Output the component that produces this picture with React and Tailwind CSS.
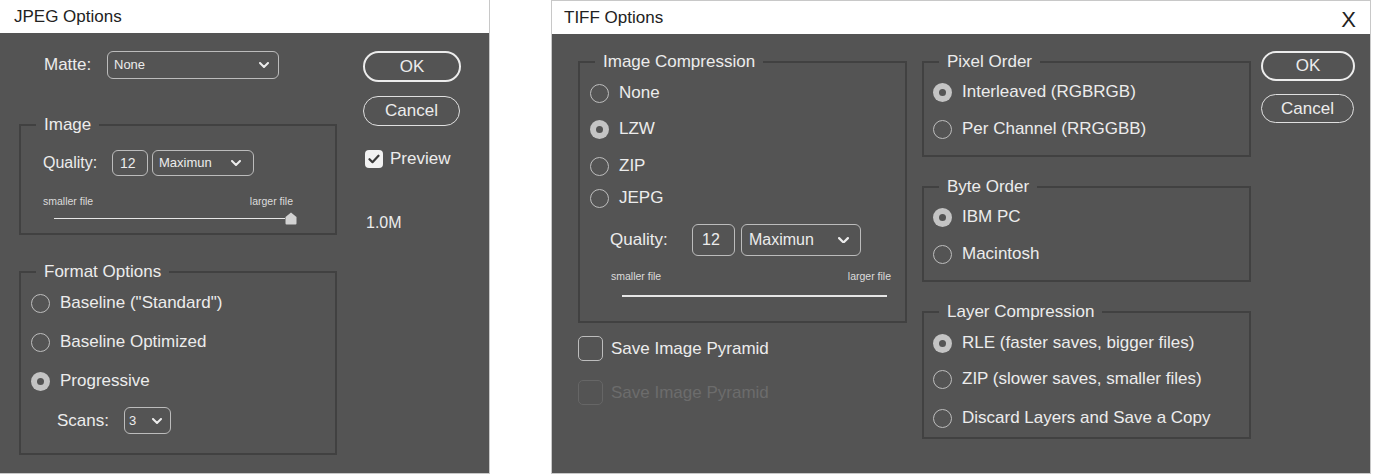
import React from 'react';

const Chevron = ({ size = 10 }) => (
  <svg width={size} height={size * 0.6} viewBox="0 0 10 6" fill="none">
    <path d="M1 1l4 4 4-4" stroke="#ececec" strokeWidth="2" strokeLinecap="round" strokeLinejoin="round" />
  </svg>
);

const Radio = ({ checked, label, className = '' }) => (
  <div className={`flex items-center gap-[10px] h-5 ${className}`}>
    {checked ? (
      <span className="w-[19px] h-[19px] rounded-full bg-[#c4c4c4] flex items-center justify-center shrink-0">
        <span className="w-[7px] h-[7px] rounded-full bg-[#545454]" />
      </span>
    ) : (
      <span className="w-[19px] h-[19px] rounded-full border-[1.5px] border-[#bdbdbd] shrink-0" />
    )}
    <span className="text-[17px] leading-5 text-[#ececec] whitespace-nowrap">{label}</span>
  </div>
);

const Group = ({ legend, className = '', children }) => (
  <fieldset className={`border-2 border-[#414141] ${className}`}>
    <legend className="ml-[15px] px-[8px] text-[17px] leading-5 text-[#ececec]">{legend}</legend>
    {children}
  </fieldset>
);

const PillButton = ({ children, primary, className = '' }) => (
  <div
    className={`rounded-full flex items-center justify-center text-[17px] text-[#ececec] ${
      primary ? 'border-2 border-[#ececec]' : 'border border-[#e0e0e0]'
    } ${className}`}
  >
    {children}
  </div>
);

const Slider = ({ withThumb, className = '' }) => (
  <div className={`flex items-center ${className}`}>
    <div className={`bg-[#e6e6e6] ${withThumb ? 'w-[231px] h-px' : 'w-[265px] h-[2px]'}`} />
    {withThumb && (
      <svg width="12" height="13" viewBox="0 0 12 13">
        <path d="M6 0.5 L11.5 5 L11.5 11.5 Q11.5 12.5 10.5 12.5 L1.5 12.5 Q0.5 12.5 0.5 11.5 L0.5 5 Z" fill="#d2d2d2" />
      </svg>
    )}
  </div>
);

const JpegDialog = () => (
  <div className="w-[490px] h-[474px] border-r border-b border-[#c8c8c8] flex flex-col shrink-0">
    <div className="h-[33px] bg-white pl-[14px] flex items-center text-[17px] text-[#222]">JPEG Options</div>
    <div className="flex-1 bg-[#545454] flex">
      <div className="w-[337px] pl-[19px]">
        <div className="mt-[18px] flex items-center h-[28px]">
          <span className="ml-[25px] w-[63px] text-[17px] text-[#ececec]">Matte:</span>
          <div className="w-[172px] h-[28px] rounded-[6px] border border-[#bcbcbc] pl-[6px] pr-[9px] flex items-center justify-between text-[13px] text-[#ececec]">
            <span>None</span>
            <Chevron />
          </div>
        </div>

        <Group legend="Image" className="mt-[36px] h-[120px]">
          <div className="mt-[15px] pl-[22px] flex items-center">
            <span className="w-[69px] text-[16px] text-[#ececec]">Quality:</span>
            <div className="w-[36px] h-[26px] rounded-[6px] border border-[#bcbcbc] pl-[7px] flex items-center text-[14px] text-[#ececec]">12</div>
            <div className="ml-[4px] w-[102px] h-[26px] rounded-[6px] border border-[#bcbcbc] pl-[6px] pr-[12px] flex items-center justify-between text-[13px] text-[#ececec]">
              <span>Maximun</span>
              <Chevron />
            </div>
          </div>
          <div className="mt-[18px] pl-[22px] pr-[42px] flex justify-between text-[10.5px] leading-[14px] text-[#dcdcdc]">
            <span>smaller file</span>
            <span>larger file</span>
          </div>
          <Slider withThumb className="mt-[4px] ml-[33px]" />
        </Group>

        <Group legend="Format Options" className="mt-[27px] h-[193px]">
          <div className="mt-[11px] pl-[10px] flex flex-col gap-[19px]">
            <Radio label={'Baseline ("Standard")'} />
            <Radio label="Baseline Optimized" />
            <Radio checked label="Progressive" />
          </div>
          <div className="mt-[16px] pl-[36px] flex items-center">
            <span className="w-[67px] text-[17px] text-[#ececec]">Scans:</span>
            <div className="w-[47px] h-[27px] rounded-[6px] border border-[#bcbcbc] pl-[4px] pr-[8px] flex items-center justify-between text-[13px] text-[#ececec]">
              <span>3</span>
              <Chevron />
            </div>
          </div>
        </Group>
      </div>

      <div className="ml-[26px] pt-[18px] flex flex-col">
        <PillButton primary className="w-[98px] h-[31px]">OK</PillButton>
        <PillButton className="mt-[14px] w-[97px] h-[30px]">Cancel</PillButton>
        <div className="mt-[20px] ml-[2px] flex items-center gap-[7px]">
          <span className="w-[18px] h-[18px] rounded-[4px] bg-[#f2f2f2] flex items-center justify-center">
            <svg width="12" height="10" viewBox="0 0 12 10" fill="none">
              <path d="M1.5 5.2l3 3 6-6.5" stroke="#3a3a3a" strokeWidth="2.2" strokeLinecap="round" strokeLinejoin="round" />
            </svg>
          </span>
          <span className="text-[17px] text-[#ececec]">Preview</span>
        </div>
        <div className="mt-[39px] ml-[3px] text-[16px] text-[#ececec]">1.0M</div>
      </div>
    </div>
  </div>
);

const TiffDialog = () => (
  <div className="ml-[61px] w-[820px] h-[474px] border border-[#c8c8c8] flex flex-col shrink-0">
    <div className="h-[33px] bg-white pl-[12px] pr-[14px] flex items-center justify-between text-[#222]">
      <span className="text-[17px]">TIFF Options</span>
      <span className="text-[22px] leading-none mt-[4px]">X</span>
    </div>
    <div className="flex-1 bg-[#545454] flex">
      <div className="ml-[26px] w-[329px]">
        <Group legend="Image Compression" className="mt-[18px] h-[271px]">
          <div className="mt-[11px] pl-[10px] flex flex-col">
            <Radio label="None" />
            <Radio checked label="LZW" className="mt-[16px]" />
            <Radio label="ZIP" className="mt-[17px]" />
            <Radio label="JEPG" className="mt-[12px]" />
          </div>
          <div className="mt-[16px] pl-[30px] flex items-center">
            <span className="w-[82px] text-[17px] text-[#ececec]">Quality:</span>
            <div className="w-[43px] h-[32px] rounded-[6px] border border-[#bcbcbc] pl-[9px] flex items-center text-[16px] text-[#ececec]">12</div>
            <div className="ml-[6px] w-[120px] h-[32px] rounded-[6px] border border-[#bcbcbc] pl-[7px] pr-[11px] flex items-center justify-between text-[16px] text-[#ececec]">
              <span>Maximun</span>
              <Chevron size={11} />
            </div>
          </div>
          <div className="mt-[13px] pl-[31px] pr-[14px] flex justify-between text-[10.5px] leading-[14px] text-[#dcdcdc]">
            <span>smaller file</span>
            <span>larger file</span>
          </div>
          <Slider className="mt-[12px] ml-[42px]" />
        </Group>

        <div className="mt-[13px] flex items-center gap-[8px]">
          <span className="w-[25px] h-[25px] rounded-[5px] border border-[#bdbdbd]" />
          <span className="text-[17px] text-[#ececec]">Save Image Pyramid</span>
        </div>
        <div className="mt-[18px] flex items-center gap-[8px]">
          <span className="w-[25px] h-[25px] rounded-[5px] border border-[#666666]" />
          <span className="text-[17px] text-[#6c6c6c]">Save Image Pyramid</span>
        </div>
      </div>

      <div className="ml-[15px] w-[329px]">
        <Group legend="Pixel Order" className="mt-[18px] h-[105px]">
          <div className="mt-[10px] pl-[9px] flex flex-col gap-[17px]">
            <Radio checked label="Interleaved (RGBRGB)" />
            <Radio label="Per Channel (RRGGBB)" />
          </div>
        </Group>
        <Group legend="Byte Order" className="mt-[20px] h-[105px]">
          <div className="mt-[10px] pl-[9px] flex flex-col gap-[17px]">
            <Radio checked label="IBM PC" />
            <Radio label="Macintosh" />
          </div>
        </Group>
        <Group legend="Layer Compression" className="mt-[20px] h-[137px]">
          <div className="mt-[11px] pl-[9px] flex flex-col">
            <Radio checked label="RLE (faster saves, bigger files)" />
            <Radio label="ZIP (slower saves, smaller files)" className="mt-[16px]" />
            <Radio label="Discard Layers and Save a Copy" className="mt-[19px]" />
          </div>
        </Group>
      </div>

      <div className="ml-[10px] pt-[17px] flex flex-col">
        <PillButton primary className="w-[94px] h-[30px]">OK</PillButton>
        <PillButton className="mt-[13px] w-[93px] h-[29px]">Cancel</PillButton>
      </div>
    </div>
  </div>
);

export default function App() {
  return (
    <div className="w-[1375px] h-[476px] bg-white flex font-['Liberation_Sans',Arial,sans-serif] overflow-hidden">
      <JpegDialog />
      <TiffDialog />
    </div>
  );
}
